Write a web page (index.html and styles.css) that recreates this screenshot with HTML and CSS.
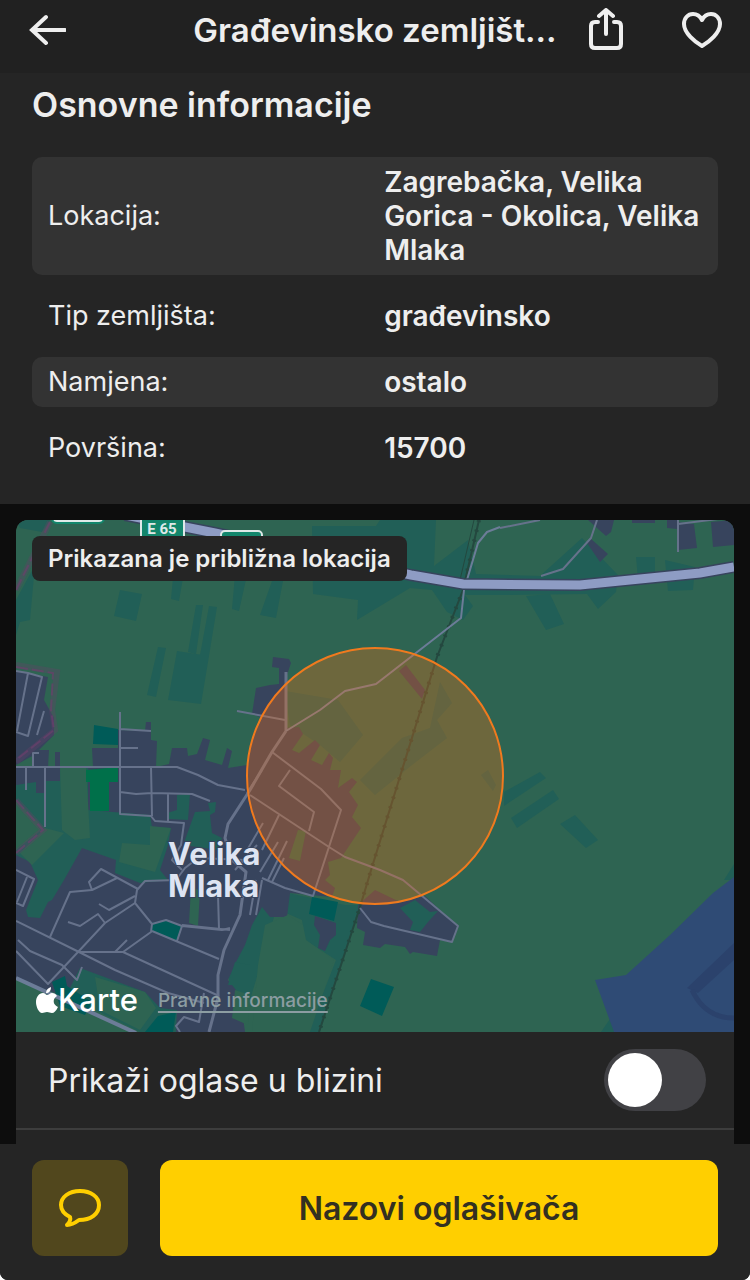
FILE: index.html
```html
<!DOCTYPE html>
<html lang="hr">
<head>
    <meta charset="UTF-8">
    <meta name="viewport" content="width=device-width, initial-scale=1.0">
    <title>Građevinsko zemljište</title>
    <link rel="stylesheet" href="styles.css">
</head>
<body>
    <header class="top-bar">
        <button class="icon-button" type="button" aria-label="Natrag">
            <svg width="40" height="44" viewBox="0 0 40 44"><path d="M39 22H6M20 9L6 22L20 35" stroke-linejoin="miter"/></svg>
        </button>
        <h1>Građevinsko zemljišt...</h1>
        <div class="actions">
            <button class="icon-button" type="button" aria-label="Podijeli">
                <svg width="40" height="44" viewBox="0 0 40 44"><path d="M12 14H9Q5 14 5 18V36Q5 40 9 40H31Q35 40 35 36V18Q35 14 31 14H28M20 26V3M13 8L20 2L27 8"/></svg>
            </button>
            <button class="icon-button" type="button" aria-label="Spremi">
                <svg width="44" height="44" viewBox="0 0 44 44"><path d="M22 38C15 34 4 25 4 16C4 10 8 6 13 6C17 6 20 8 22 12C24 8 27 6 31 6C36 6 40 10 40 16C40 25 29 34 22 38Z"/></svg>
            </button>
        </div>
    </header>

    <section class="info">
        <h2>Osnovne informacije</h2>
        <table>
            <tr>
                <th scope="row">Lokacija:</th>
                <td>Zagrebačka, Velika Gorica - Okolica, Velika Mlaka</td>
            </tr>
            <tr>
                <th scope="row">Tip zemljišta:</th>
                <td>građevinsko</td>
            </tr>
            <tr>
                <th scope="row">Namjena:</th>
                <td>ostalo</td>
            </tr>
            <tr>
                <th scope="row">Površina:</th>
                <td>15700</td>
            </tr>
        </table>
    </section>

    <main class="card">
        <div class="map">
            <svg class="map-canvas" viewBox="16 520 718 512" preserveAspectRatio="xMidYMid slice">
                <rect x="16" y="520" width="718" height="512" fill="#2e6452"/>

                <!-- fields -->
                <g fill="#215f57">
                    <path d="M120 590L142 594L136 621L114 616ZM173 578H183L179 601L171 599ZM235 575H247L239 611L232 609ZM196 605H203L196 654L188 652ZM209 606L217 607L208 662L200 655ZM177 651L209 656L201 704L168 700ZM158 647L166 648L156 697L147 695Z"/>
                    <path d="M16 600L35 565L30 620L20 622L16 635ZM16 520H50L42 532L20 528ZM272 581L283 581L276 618L260 615Z"/>
                    <path d="M312 526L376 526L380 520H436L434 566L468 540L476 574L540 576L582 538L618 575L616 592L598 609L587 594L500 595H465L473 606L463 620L447 612L432 590L410 588L357 620L358 600L313 594Z"/>
                    <path d="M526 596L550 594L564 624L546 630ZM636 557L655 557L655 580H638ZM665 560L695 567L693 590L668 591Z"/>
                    <path d="M504 792L540 772L546 778L504 806ZM511 818L553 790L559 799L517 828ZM560 824L575 815L598 840L586 848Z"/>
                    <path d="M724 880L734 864V880ZM601 1032L612 1016L620 1032Z"/>
                    <path d="M285 691L338 700L363 735L340 762L320 745L290 725ZM360 780L402 738L430 728L440 682L452 703L437 720L447 738L412 765L375 795ZM481 775L488 770L496 785L493 791Z"/>
                    <path d="M262 905L288 893L345 905L360 905L320 1032H308L336 960L305 940L302 920L286 913L274 917L262 960L250 1000H228L230 960Z"/>
                </g>
                <path d="M16 767H100L88 900H16Z" fill="#37445d"/>
                <path d="M595 980L626 975L670 935L713 893L734 877V1032H614Z" fill="#2f4b75"/>
                <path d="M687 988L734 943V960L698 993Z" fill="#2b426c"/>
                <path d="M692 990Q705 1018 734 1018" fill="none" stroke="#2b426c" stroke-width="5"/>

                <!-- built-up areas -->
                <g fill="#37445d">
                    <path d="M16 767H93L92 748H118V730L145 731L146 722H151V740L157 741L156 767L169 764L172 748H187L188 756L197 754L203 738L210 740L205 760L222 765L227 748L232 751L228 768L247 765L252 740L262 718L252 714L256 688L270 685L279 684V668L272 667L273 657L289 659L291 663L286 678L285 728L299 727L303 734L292 750L299 753L315 740L320 745L311 760L322 765L329 753L333 758L330 770L341 770L338 788L352 778L357 782L349 792L358 805L352 817L361 828L341 858L328 862L330 875L325 880L335 888L332 897L290 893L287 917H270L262 907L252 925L245 945L236 962L228 980L240 995L245 1032H176L16 980Z"/>
                    <path d="M16 671L48 677L44 700L54 718V735L34 755L16 765ZM33 750H49L48 767H33ZM55 752H60V767H55Z"/>
                    <path d="M358 905L375 890L400 902L425 896L457 926L452 942L440 940L437 956L413 952L410 954L405 947L385 944L380 948L363 945L365 932L357 928Z"/>
                    <path d="M315 916L336 923V935L330 940L325 951L318 948L320 935L314 925Z"/>
                    <path d="M588 520H614L611 532L606 536ZM590 538L608 554L600 562L587 543ZM678 522L694 524L697 548L678 550ZM711 522L734 520V545L713 547ZM667 520H677V529L667 528ZM632 520H655V523H632Z"/>
                    <path d="M399 671L406 665L425 690L422 699Z"/>
                </g>

                <!-- green gaps between the houses -->
                <g fill="#215f57">
                    <path d="M16 785L36 782V793H45V781H60V767H88V810L150 815L152 827L171 828L168 845L160 870L168 880L140 883L115 873L116 860L82 848L64 880L52 900L48 902L40 918L28 917L26 910L38 880L30 862L16 855Z"/>
                    <path d="M177 795L190 793L188 820L169 819L167 813L177 810ZM185 840L195 812L210 811L208 803L216 802L215 812L210 815L212 833L222 838L218 850L184 845Z"/>
                    <path d="M80 968L145 992L160 1008L177 1010L176 1032H140L66 996ZM228 985L235 962L250 965V985Z"/>
                    <path d="M400 908L415 900L430 912L438 911L428 922L420 932L410 930L413 922Z"/>
                </g>
                <g fill="#2e6452">
                    <path d="M60 767H86L90 838L75 840L62 830ZM16 800L44 828L16 850ZM45 828L64 833L32 865L20 853ZM122 843L150 845V826L171 828L155 872L119 862Z"/>
                    <path d="M191 888L200 890L198 926L189 923ZM16 980L134 1032H16ZM235 990L250 995L248 1025L232 1018ZM298 830L306 831L300 861L289 858Z"/>
                    <path d="M95 977L145 992L156 1008L140 1030L100 1010ZM265 925L288 915L303 925L306 940L334 960L310 1032H252L258 965Z"/>
                </g>
                <path d="M94 725L118 729V745L93 744ZM151 923L166 920L182 926L177 941L152 932ZM52 982L65 976L67 986L92 1002L85 1015L60 1006ZM312 897L338 902L334 921L309 914ZM371 979L394 987L382 1016L360 1006ZM158 1016L176 1012L173 1032H145Z" fill="#005b58"/>
                <path d="M86 770L118 767V782H109V811H90V782H86Z" fill="#00704a"/>

                <!-- municipal border -->
                <g fill="none" stroke="#69406b" stroke-opacity=".3" stroke-width="6">
                    <path d="M50 522L16 590"/>
                    <path d="M16 665L57 672L52 710L55 730L16 762M16 800L43 830L16 853"/>
                </g>
                <g fill="none" stroke="#69406b" stroke-opacity=".7" stroke-width="2" stroke-dasharray="12 4">
                    <path d="M50 522L16 590M16 667L53 673L51 710L54 730L16 760M16 800L43 830L16 853"/>
                </g>

                <!-- railway -->
                <path d="M479 520L463 590L437 657L402 770L372 867L360 907L319 1032" fill="none" stroke="#24483f" stroke-width="2"/>
                <path d="M479 520L463 590L437 657L402 770L372 867L360 907L319 1032" fill="none" stroke="#24483f" stroke-width="4" stroke-dasharray="2 8"/>
                <path d="M474 520L460 580" fill="none" stroke="#24483f"/>

                <!-- streets -->
                <g fill="none" stroke="#66728b" stroke-width="2" stroke-linejoin="round">
                    <path d="M16 671L28 673L42 677L28 736L16 732M28 673L17 731M37 735L44 711M33 767V753H39M26 767V790M45 767V827"/>
                    <path d="M16 767H177L198 775L218 785L245 790M120 712V814L151 816L155 821L184 823L181 845L172 860L182 870M120 729L151 731M120 748H138M151 767L152 816M120 792L136 794L152 793L192 794L210 801M168 793V821"/>
                    <path d="M237 711L285 720M272 752L321 789L341 810L313 896L285 888L262 878M290 770L279 786L314 812L309 831M250 795L329 847L345 857L380 870L403 880L458 926L452 942L384 926L371 922L360 908"/>
                    <path d="M262 770L247 793M279 815L262 850M263 823L246 852M278 842L260 872M287 841L268 880M284 858L272 882M257 845L235 870M218 895L219 929M230 930L182 925M245 860L198 858L185 868L176 880L145 881L137 890L135 903L152 924L151 932L123 952H79L16 921"/>
                    <path d="M138 889L101 869L89 882L92 890L117 878M50 937L70 892L92 890M135 903L105 923L78 952L48 984L16 951M99 904L109 910L135 896M68 922L80 926L98 914L105 923M115 952L127 940M18 940L30 951L62 965L77 980L82 967M79 952L115 970L168 993L204 1003M123 952L219 996M152 931L219 959M182 926L177 941M152 924L166 920L182 926L222 930L230 928"/>
                    <path d="M16 870L34 879L23 906L16 903M27 877L17 902M204 993L199 1022L184 1017L176 1026L180 1032M262 880L256 915M256 880L250 915"/>
                    <path d="M500 528L540 520M597 520L591 538L563 569L541 576M678 520V552M678 524L734 517"/>
                    <path d="M286 672V731M286 731L272 752L250 790L228 824L225 838L232 860L246 872L240 915L224 950L218 975V998L209 1032" stroke-width="3"/>
                </g>
                <g fill="none" stroke="#6c7c98" stroke-linejoin="round">
                    <path d="M500 527L487 532L478 543L464 590L461 618L376 684L345 691L320 710L286 731" stroke-width="2"/>
                    <path d="M16 978L136 1033" stroke-width="4"/>
                </g>

                <path d="M125 515L215 533L411 575L463 584L580 585L700 573L734 567" fill="none" stroke="#37445d" stroke-width="12"/>
                <path d="M125 515L215 533L411 575L463 584L580 585L700 573L734 567" fill="none" stroke="#8e9cc4" stroke-width="9"/>

                <g fill="#13866c" stroke="#dfe9e8" stroke-width="2">
                    <rect x="52" y="500" width="52" height="23" rx="5" fill="#dfe9e8" stroke="#13866c"/>
                    <rect x="141" y="512" width="43" height="32"/>
                    <rect x="221" y="531" width="41" height="30" rx="4"/>
                </g>
                <text class="shield" x="162" y="534">E 65</text>

                <circle cx="375" cy="776" r="128" fill="rgba(255, 113, 12, .3)" stroke="#f07a1e" stroke-width="2"/>

                <text class="place" x="168" y="865">Velika<tspan x="168" dy="32">Mlaka</tspan></text>
            </svg>
            <p class="map-note">Prikazana je približna lokacija</p>
            <div class="map-credit">
                <span class="maps-logo">
                    <svg width="22" height="26" viewBox="0 0 22 26"><path d="M15 0C15 4 13 6 10 6C10 3 12 1 15 0ZM11 8C13 8 14 6 16 6C18 6 20 7 21 9C16 12 17 18 22 20C20 24 18 26 16 26C14 26 13 25 11 25C9 25 8 26 6 26C3 26 0 20 0 15C0 10 3 6 7 6C9 6 10 8 11 8Z"/></svg>Karte
                </span>
                <a href="#">Pravne informacije</a>
            </div>
        </div>
        <div class="toggle-row">
            <label for="nearby">Prikaži oglase u blizini</label>
            <input class="switch" id="nearby" type="checkbox">
        </div>
    </main>

    <footer class="bottom-bar">
        <button class="chat-button" type="button" aria-label="Poruka">
            <svg width="44" height="44" viewBox="0 0 44 44"><path d="M12 31C6 28 3 24 3 19C3 11 11 5 22 5C33 5 41 11 41 19C41 28 33 34 21 34C17 37 14 39 9 39C12 36 13 34 12 31Z"/></svg>
        </button>
        <button class="call-button" type="button">Nazovi oglašivača</button>
    </footer>
</body>
</html>
```

FILE: styles.css
```css
html {
    background-color: #fff;
}
* {
    box-sizing: border-box;
}
body {
    display: flex;
    flex-direction: column;
    min-height: 100vh;
    margin: 0;
    background-color: #0d0d0d;
    color: #eee;
    font-family: Inter, "Liberation Sans", sans-serif;
    border-radius: 0 0 8px 8px;
    overflow: hidden;
}
h1, h2, p {
    margin: 0;
}
button {
    border: none;
    padding: 0;
    font-family: inherit;
    cursor: pointer;
}

/* Top bar */
.top-bar {
    display: grid;
    grid-template-columns: 1fr auto 1fr;
    align-items: center;
    padding: 8px 26px 21px;
    background-color: #212121;
}
.top-bar h1 {
    font-size: 33px;
    line-height: 44px;
    font-weight: 600;
    white-space: nowrap;
}
.actions {
    display: flex;
    justify-content: flex-end;
    gap: 54px;
}
.icon-button {
    width: fit-content;
    background: none;
}
.icon-button svg,
.chat-button svg {
    display: block;
    fill: none;
    stroke: #eee;
    stroke-width: 4;
    stroke-linecap: round;
    stroke-linejoin: round;
}

/* Basic info */
.info {
    padding: 8px 32px 15px;
    background-color: #252525;
}
.info h2 {
    font-size: 34px;
    line-height: 48px;
    font-weight: 600;
}
table {
    width: 100%;
    table-layout: fixed;
    border-collapse: separate;
    border-spacing: 0 16px;
    margin-top: 12px;
}
th, td {
    padding: 8px 16px;
    line-height: 34px;
    text-align: left;
}
th {
    width: 49%;
    font-size: 27px;
    font-weight: 400;
    border-radius: 10px 0 0 10px;
}
td {
    font-size: 28px;
    font-weight: 600;
    border-radius: 0 10px 10px 0;
}
tr:nth-child(odd) > * {
    background-color: #333;
}

/* Map card */
.card {
    flex: 1;
    margin: 16px 16px 0;
    background-color: #252525;
    border-radius: 12px 12px 0 0;
    overflow: hidden;
}
.map {
    position: relative;
}
.map-canvas {
    display: block;
    width: 100%;
}
.shield {
    fill: #dfe9e8;
    font-family: Roboto, "Liberation Sans", sans-serif;
    font-size: 15px;
    font-weight: 700;
    text-anchor: middle;
}
.place {
    fill: #dde4f2;
    stroke: #37445d;
    stroke-width: 2px;
    paint-order: stroke;
    font-size: 31px;
    font-weight: 700;
}
.map-note {
    position: absolute;
    top: 16px;
    left: 16px;
    padding: 6px 16px;
    background-color: #252525;
    border-radius: 8px;
    font-size: 24px;
    line-height: 33px;
    font-weight: 600;
}
.map-credit {
    position: absolute;
    left: 20px;
    bottom: 12px;
    display: flex;
    align-items: center;
    gap: 20px;
}
.maps-logo {
    display: flex;
    align-items: center;
    color: #fff;
    font-size: 31px;
    line-height: 40px;
    font-weight: 500;
}
.maps-logo svg {
    fill: #fff;
}
.map-credit a {
    color: #8c9da2;
    font-size: 19px;
    font-weight: 500;
    text-underline-offset: 4px;
    text-decoration-thickness: 2px;
}
.toggle-row {
    display: flex;
    align-items: center;
    justify-content: space-between;
    padding: 17px 28px 17px 32px;
    border-bottom: 2px solid #3d3d3d;
    font-size: 32px;
}
.switch {
    appearance: none;
    display: flex;
    width: 102px;
    height: 62px;
    margin: 0;
    padding: 4px;
    background-color: #414145;
    border-radius: 31px;
}
.switch::before {
    content: "";
    width: 54px;
    height: 54px;
    border-radius: 50%;
    background-color: #fff;
}
.switch:checked {
    justify-content: flex-end;
    background-color: #ffcf00;
}

/* Bottom bar */
.bottom-bar {
    display: flex;
    gap: 32px;
    padding: 16px 32px 24px;
    background-color: #252525;
}
.chat-button,
.call-button {
    height: 96px;
    border-radius: 12px;
}
.chat-button {
    display: grid;
    place-items: center;
    width: 96px;
    background-color: #51471d;
}
.chat-button svg {
    stroke: #ffcf00;
}
.call-button {
    flex: 1;
    background-color: #ffcf00;
    color: #333021;
    font-size: 32px;
    font-weight: 600;
}
```
